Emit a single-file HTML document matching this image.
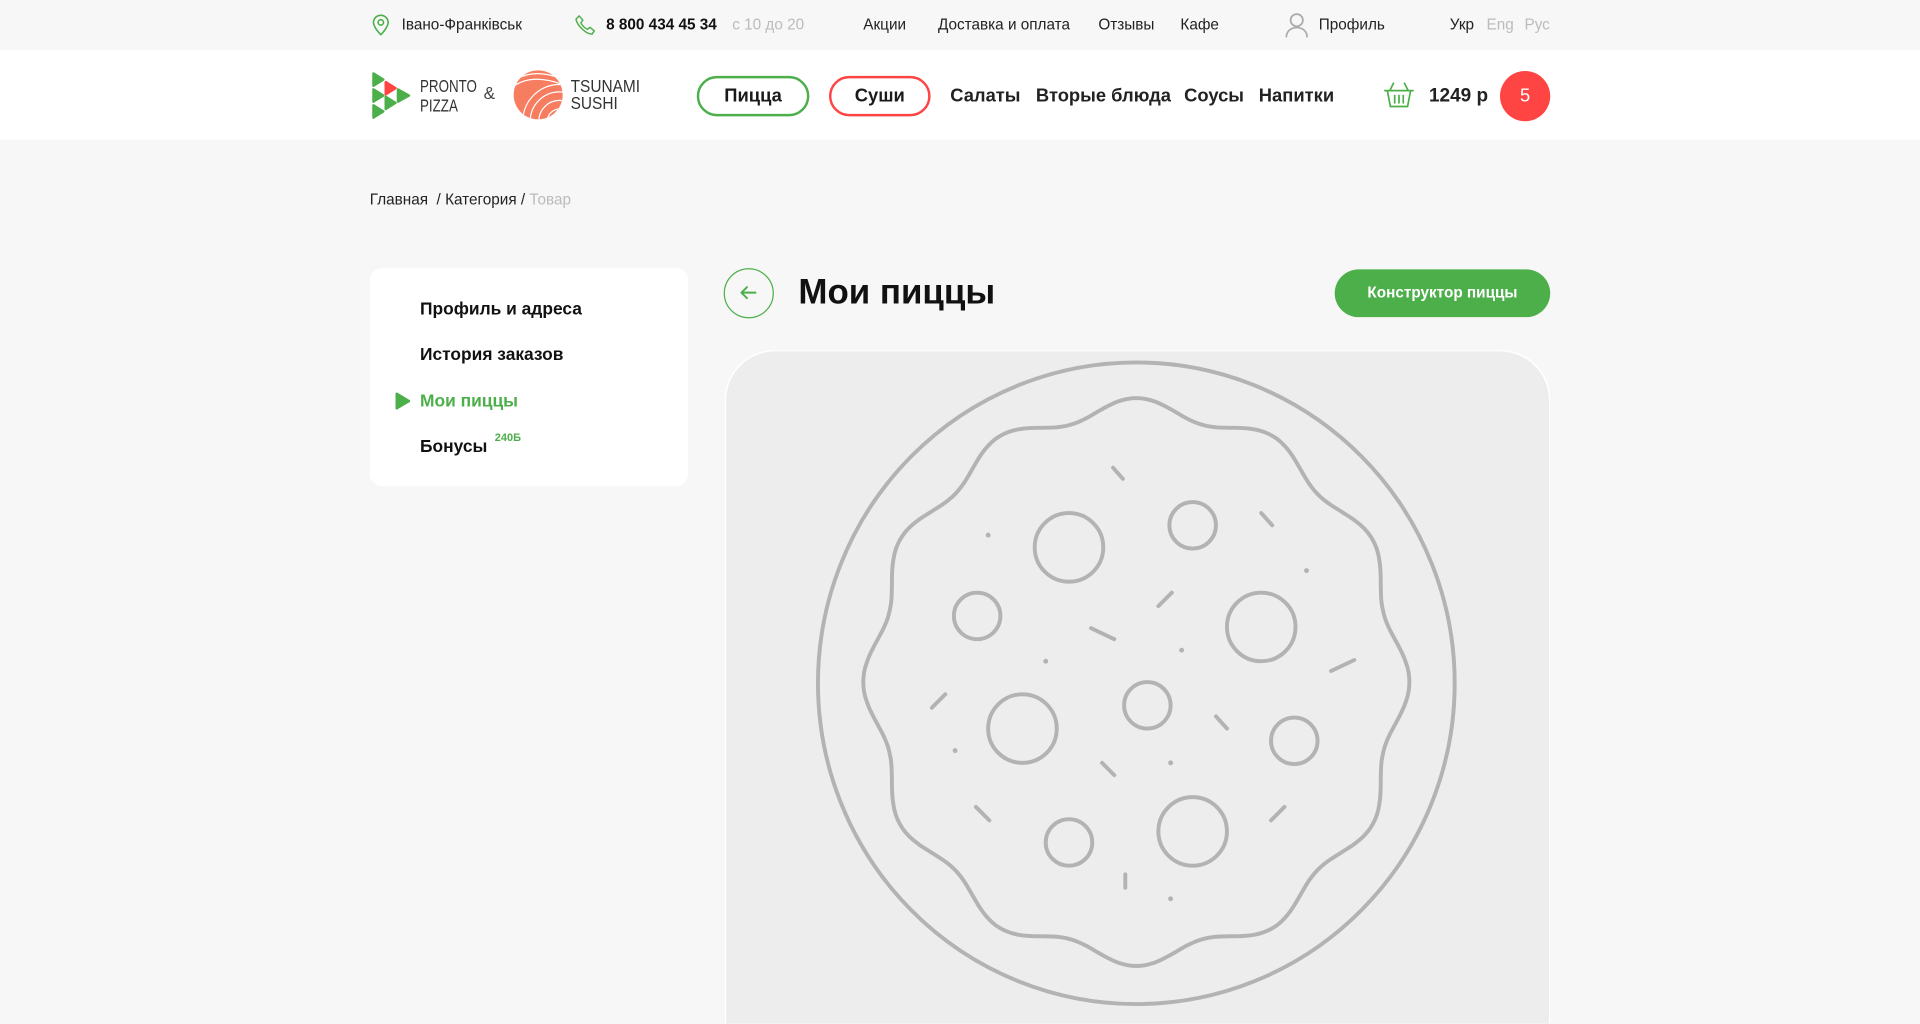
<!DOCTYPE html>
<html><head><meta charset="utf-8">
<style>
*{margin:0;padding:0;box-sizing:border-box}
html,body{width:1920px;height:1024px;overflow:hidden;background:#f7f7f7;font-family:"Liberation Sans",sans-serif;color:#1a1a1a}
#w{position:absolute;left:0;top:0;width:1568px;height:836px;overflow:hidden;transform:scale(1.22449);transform-origin:0 0}
.a{position:absolute;white-space:nowrap}
.top{position:absolute;left:0;top:0;width:1568px;height:41px;background:#f7f7f7}
.hdr{position:absolute;left:0;top:41px;width:1568px;height:73px;background:#fff}
.t{font-size:12.5px;top:13px;color:#222}
.nav{font-size:15px;font-weight:bold;top:70px;color:#222}
.btn{position:absolute;top:62px;height:33px;border-radius:17px;border:2px solid;font-size:15px;font-weight:bold;text-align:center;line-height:29px;background:#fff}
.side{position:absolute;left:302px;top:219px;width:260px;height:178px;background:#fff;border-radius:10px}
.si{font-size:14.2px;font-weight:bold;color:#111;left:343px}
</style></head><body>
<div id="w">
<div class="top"></div>
<div class="hdr"></div>
<svg class="a" style="left:303px;top:11px" width="16" height="19" viewBox="0 0 16 19"><path d="M8 1.5C4.6 1.5 2 4.1 2 7.3c0 4.2 6 10 6 10s6-5.8 6-10c0-3.2-2.6-5.8-6-5.8z" fill="none" stroke="#4caf4a" stroke-width="1.3"/><circle cx="8" cy="7.3" r="2.2" fill="none" stroke="#4caf4a" stroke-width="1.3"/></svg>
<div class="a t" style="left:328px">Івано-Франківськ</div>
<svg class="a" style="left:469px;top:11px" width="19" height="19" viewBox="0 0 19 19"><path d="M4 2l3 3.5-1.6 2c1 2.4 3 4.4 5.4 5.4l2-1.6 3.5 3-1.8 2.6C9.6 17 2 9.4 1.4 4.6z" fill="none" stroke="#4caf4a" stroke-width="1.2" stroke-linejoin="round"/></svg>
<div class="a t" style="left:495px;font-weight:bold;color:#111">8 800 434 45 34</div>
<div class="a t" style="left:598px;color:#bbb">с 10 до 20</div>
<div class="a t" style="left:705px">Акции</div>
<div class="a t" style="left:766px">Доставка и оплата</div>
<div class="a t" style="left:897px">Отзывы</div>
<div class="a t" style="left:964px">Кафе</div>
<svg class="a" style="left:1049px;top:10px" width="20" height="21" viewBox="0 0 20 21"><circle cx="10" cy="6.5" r="5" fill="none" stroke="#aaa" stroke-width="1.4"/><path d="M1.5 20.5c0-5 3.8-8 8.5-8s8.5 3 8.5 8" fill="none" stroke="#aaa" stroke-width="1.4"/></svg>
<div class="a t" style="left:1077px">Профиль</div>
<div class="a t" style="left:1184px">Укр</div>
<div class="a t" style="left:1214px;color:#bbb">Eng</div>
<div class="a t" style="left:1245px;color:#bbb">Рус</div>
<svg class="a" style="left:302px;top:58px" width="36" height="40" viewBox="0 0 36 40"><g fill="#4caf4a" stroke="#4caf4a" stroke-width="2" stroke-linejoin="round"><path d="M3 2l8 5-8 5z"/><path d="M3 15l8 5-8 5z"/><path d="M3 28l8 5-8 5z"/><path d="M13 21l8 5-8 5z"/><path d="M23 15l9 5-9 5z"/></g><path d="M13 9l8 5-8 5z" fill="#f44" stroke="#f44" stroke-width="2" stroke-linejoin="round"/></svg>
<div class="a" style="left:343px;top:62px;font-size:14px;line-height:16px;color:#333;transform:scaleX(.78);transform-origin:0 0">PRONTO<br>PIZZA</div>
<div class="a" style="left:395px;top:68px;font-size:14px;color:#444">&amp;</div>
<svg class="a" style="left:419px;top:57px" width="41" height="41" viewBox="0 0 41 41"><defs><clipPath id="c"><circle cx="20.5" cy="20.5" r="20"/></clipPath></defs><circle cx="20.5" cy="20.5" r="20" fill="#f67d60"/><g clip-path="url(#c)" fill="none" stroke="#fff" stroke-width="1"><circle cx="38" cy="42" r="30"/><circle cx="38" cy="42" r="24"/><circle cx="38" cy="42" r="17"/><circle cx="38" cy="42" r="10"/><path d="M0 14c10-8 25-8 40-2"/><path d="M2 8c10-6 22-6 34-2"/></g></svg>
<div class="a" style="left:466px;top:63px;font-size:14px;line-height:14px;color:#333;transform:scaleX(.9);transform-origin:0 0">TSUNAMI<br>SUSHI</div>
<div class="btn" style="left:569px;width:92px;border-color:#4caf4a">Пицца</div>
<div class="btn" style="left:677px;width:83px;border-color:#f44">Суши</div>
<div class="a nav" style="left:776px">Салаты</div>
<div class="a nav" style="left:846px">Вторые блюда</div>
<div class="a nav" style="left:967px">Соусы</div>
<div class="a nav" style="left:1028px">Напитки</div>
<svg class="a" style="left:1130px;top:66px" width="25" height="23" viewBox="0 0 25 23"><g fill="none" stroke="#4caf4a" stroke-width="1.4" stroke-linecap="round"><path d="M8 2L5 8M17 2l3 6M1 8h23M3 8l2.5 13h14L22 8M9 12v6M12.5 12v6M16 12v6"/></g></svg>
<div class="a" style="left:1167px;top:70px;font-size:15.5px;font-weight:bold;color:#222">1249 р</div>
<div class="a" style="left:1225px;top:58px;width:41px;height:41px;border-radius:50%;background:#f44;color:#fff;text-align:center;line-height:41px;font-size:15px">5</div>
<div class="a" style="left:302px;top:156px;font-size:12.5px;color:#222">Главная &nbsp;/ Категория / <span style="color:#bbb">Товар</span></div>
<div class="side"></div>
<div class="a si" style="top:245px">Профиль и адреса</div>
<div class="a si" style="top:282px">История заказов</div>
<svg class="a" style="left:322px;top:320px" width="14" height="15" viewBox="0 0 14 15"><path d="M2 1.5l10 6-10 6z" fill="#4caf4a" stroke="#4caf4a" stroke-width="2" stroke-linejoin="round"/></svg>
<div class="a si" style="top:320px;color:#4caf4a">Мои пиццы</div>
<div class="a si" style="top:357px">Бонусы</div>
<div class="a" style="left:404px;top:352px;font-size:9px;color:#4caf4a;font-weight:bold">240Б</div>
<div class="a" style="left:591px;top:219px;width:41px;height:41px;border-radius:50%;border:1.5px solid #4caf4a"></div>
<svg class="a" style="left:604px;top:233px" width="14" height="12" viewBox="0 0 14 12"><path d="M13 6H2M6 1.5L1.5 6 6 10.5" fill="none" stroke="#4caf4a" stroke-width="1.6" stroke-linecap="round" stroke-linejoin="round"/></svg>
<div class="a" style="left:652px;top:223px;font-size:28.5px;font-weight:bold;color:#111">Мои пиццы</div>
<div class="a" style="left:1090px;top:220px;width:176px;height:39px;border-radius:20px;background:#4caf4a;color:#fff;font-size:12.5px;font-weight:bold;text-align:center;line-height:39px">Конструктор пиццы</div>
<div class="a" style="left:592px;top:286px;width:674px;height:550px;border-radius:40px 40px 0 0;background:#fff"></div>
<div class="a" style="left:593px;top:287px;width:672px;height:549px;border-radius:40px 40px 0 0;background:#ededed"></div>
<svg class="a" style="left:0;top:0" width="1568" height="836" viewBox="0 0 1568 836">
<g fill="none" stroke="#b3b3b3" stroke-width="3.2" stroke-linecap="round">
<ellipse cx="928" cy="558" rx="260" ry="262"/>
<path id="wv" d=""/>
<circle cx="873" cy="447" r="28"/><circle cx="974" cy="429" r="19"/><circle cx="798" cy="503" r="19"/><circle cx="1030" cy="512" r="28"/><circle cx="937" cy="576" r="19"/><circle cx="835" cy="595" r="28"/><circle cx="1057" cy="605" r="19"/><circle cx="873" cy="688" r="19"/><circle cx="974" cy="679" r="28"/>
<path d="M909 382l8 9M1030 419l9 10M957 484l-11 11M891 513l19 9M1106 539l-19 9M772 567l-11 11M993 585l9 10M900 623l10 10M797 659l11 11M1049 659l-11 11M919 714v11"/>
</g>
<g fill="#b3b3b3"><circle cx="807" cy="437" r="2"/><circle cx="1067" cy="466" r="2"/><circle cx="854" cy="540" r="2"/><circle cx="965" cy="531" r="2"/><circle cx="780" cy="613" r="2"/><circle cx="956" cy="623" r="2"/><circle cx="956" cy="734" r="2"/></g>
</svg>
</div>
<script>
(function(){var cx=928,cy=557,d="";for(var i=0;i<=360;i++){var a=i*Math.PI/180;var r=216+7*Math.cos(12*a);var x=cx+r*Math.sin(a),y=cy-r*Math.cos(a)*1.04;d+=(i?"L":"M")+x.toFixed(1)+" "+y.toFixed(1);}document.getElementById("wv").setAttribute("d",d+"Z");})();
</script>
</body></html>
